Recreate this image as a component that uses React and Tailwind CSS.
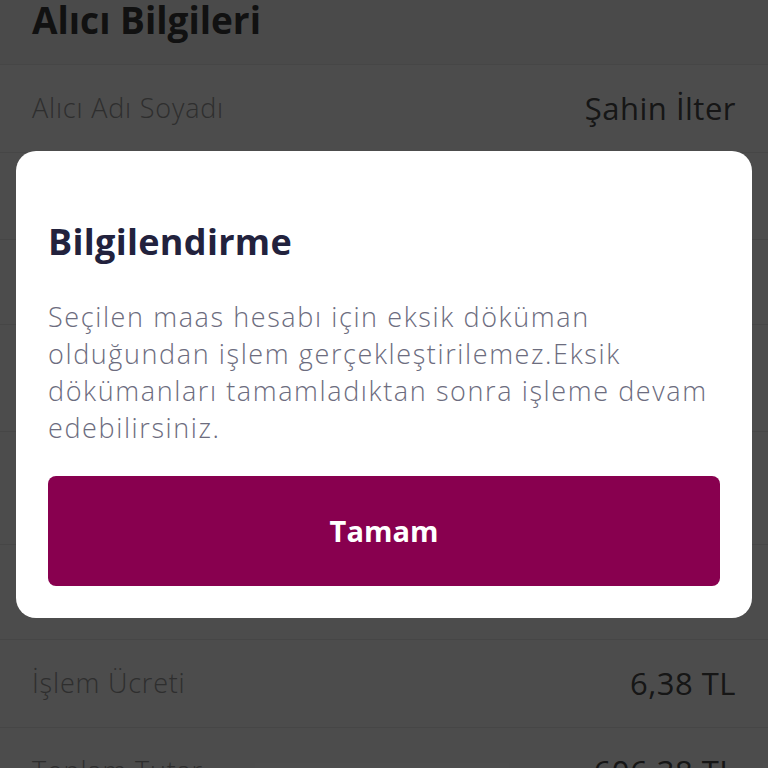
import React from "react";

const rows = [
  { label: "Alıcı Adı Soyadı", value: "Şahin İlter", h: "h-[88px]" },
  { label: "IBAN", value: "TR12 0001 2345 6789", h: "h-[87px]" },
  { label: "Banka", value: "Ziraat Bankası", h: "h-[85px]" },
  { label: "Açıklama", value: "Maaş ödemesi", h: "h-[107px]" },
  { label: "Tutar", value: "600,00 TL", h: "h-[113px]" },
  { label: "Gönderen Hesap", value: "Maaş Hesabı", h: "h-[95px]" },
  { label: "İşlem Ücreti", value: "6,38 TL", h: "h-[88px]" },
  { label: "Toplam Tutar", value: "606,38 TL", h: "h-[88px]" },
];

export default function App() {
  return (
    <div
      className="relative h-[768px] overflow-hidden bg-white"
      style={{ fontFamily: "'Open Sans', 'Noto Sans', sans-serif" }}
    >
      {/* page behind the dialog */}
      <div className="flex h-[65px] items-start border-b border-[#ececec] bg-[#f7f7f7] px-8">
        <h1 className="text-[37px] font-bold leading-[40px] text-[#3a3a3a]">
          Alıcı Bilgileri
        </h1>
      </div>
      {rows.map((r) => (
        <div
          key={r.label}
          className={`flex items-center justify-between border-b border-[#ececec] px-8 ${r.h}`}
        >
          <span className="text-[27px] font-light tracking-[0.8px] text-[#9a9a9a]">
            {r.label}
          </span>
          <span className="text-[31px] tracking-[0.5px] text-[#4a4a4a]">{r.value}</span>
        </div>
      ))}

      {/* dialog */}
      <div className="absolute inset-0 flex items-center justify-center bg-black/70 px-4">
        <div className="w-full rounded-[20px] bg-white px-8 pt-[69px] pb-[32px]">
          <h2 className="text-[36px] font-bold leading-[44px] tracking-[0.3px] text-[#22223d]">
            Bilgilendirme
          </h2>
          <p className="mt-[34px] text-[27px] font-light leading-[37px] tracking-[1.6px] text-[#6c6c7e]">
            Seçilen maas hesabı için eksik döküman
            <br />
            olduğundan işlem gerçekleştirilemez.Eksik
            <br />
            dökümanları tamamladıktan sonra işleme devam
            <br />
            edebilirsiniz.
          </p>
          <button className="mt-[30px] flex h-[110px] w-full items-center justify-center rounded-lg bg-[#88004f] text-[29px] font-bold text-white">
            Tamam
          </button>
        </div>
      </div>
    </div>
  );
}
